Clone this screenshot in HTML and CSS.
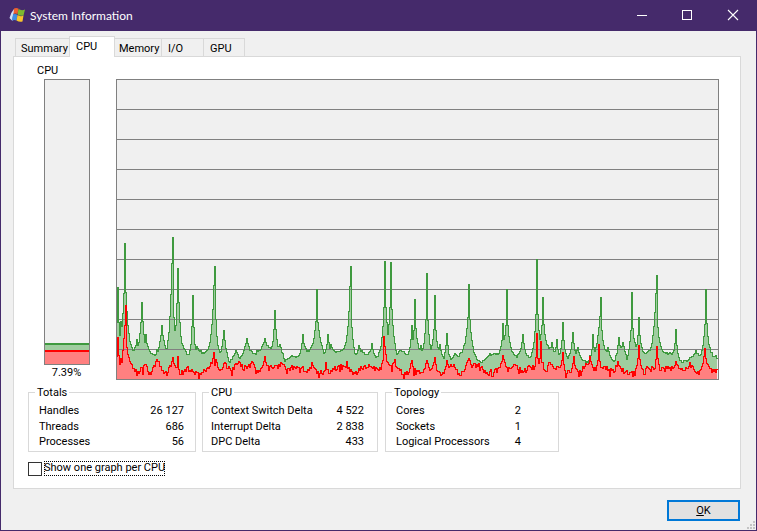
FILE: index.html
```html
<!DOCTYPE html>
<html lang="en">
<head>
<meta charset="utf-8">
<title>System Information</title>
<link rel="stylesheet" href="styles.css">
</head>
<body>
<div class="window">
  <header class="titlebar">
    <svg class="appicon" viewBox="0 0 16 16" width="16" height="16" aria-hidden="true">
      <path d="M0.500 11 Q1.500 6 5 2 L6.500 3 Q3.500 7 3.500 14 Z" fill="#cfe0f5"/>
      <path d="M5 1.500 Q7 .5 9.500 1.500 L8.500 7 Q6.500 6 4.500 7 Z" fill="#f0602e"/>
      <path d="M9.500 2 Q12.500 4 16 2.500 L14.500 8.500 Q11.500 9.500 8.500 7.500 Z" fill="#7db92f"/>
      <path d="M4 7.500 Q6.500 6.500 8.500 8 L7.500 13.500 Q5.500 12.500 3 13.500 Z" fill="#3d8fe3"/>
      <path d="M8.500 8 Q11.500 10 14.500 8.500 L13.500 14.500 Q10.500 15.500 7.500 13.500 Z" fill="#f8c52c"/>
    </svg>
    <span class="title">System Information</span>
    <div class="caption">
      <svg width="46" height="31" viewBox="0 0 46 31" aria-hidden="true"><path d="M18 15.500H28" stroke="#fff"/></svg>
      <svg width="46" height="31" viewBox="0 0 46 31" aria-hidden="true"><rect x="17.500" y="10.500" width="9" height="9" fill="none" stroke="#fff"/></svg>
      <svg width="46" height="31" viewBox="0 0 46 31" aria-hidden="true"><path d="M17 10L27 20M27 10L17 20" stroke="#fff" stroke-width="1.100"/></svg>
    </div>
  </header>
  <main class="content">
    <nav class="tabs">
      <span class="tab t-summary">Summary</span>
      <span class="tab t-cpu active">CPU</span>
      <span class="tab t-mem">Memory</span>
      <span class="tab t-io">I/O</span>
      <span class="tab t-gpu">GPU</span>
    </nav>
    <section class="panel">
      <div class="graphs">
        <div class="meter">
          <div class="meter-label">CPU</div>
          <div class="meter-bar">
            <div class="meter-green"></div>
            <div class="meter-red"></div>
          </div>
          <div class="meter-value">7.39%</div>
        </div>
        <svg class="chart" id="chart" width="603" height="301" viewBox="0 0 603 301" aria-hidden="true"></svg>
      </div>
      <div class="groups">
        <fieldset class="group g-totals">
          <legend>Totals</legend>
          <div class="row"><span>Handles</span><span>26 127</span></div>
          <div class="row"><span>Threads</span><span>686</span></div>
          <div class="row"><span>Processes</span><span>56</span></div>
        </fieldset>
        <fieldset class="group g-cpu">
          <legend>CPU</legend>
          <div class="row"><span>Context Switch Delta</span><span>4 522</span></div>
          <div class="row"><span>Interrupt Delta</span><span>2 838</span></div>
          <div class="row"><span>DPC Delta</span><span>433</span></div>
        </fieldset>
        <fieldset class="group g-topo">
          <legend>Topology</legend>
          <div class="row"><span>Cores</span><span>2</span></div>
          <div class="row"><span>Sockets</span><span>1</span></div>
          <div class="row"><span>Logical Processors</span><span>4</span></div>
        </fieldset>
      </div>
      <label class="check"><span class="box"></span><span class="check-text">Show one graph per CPU</span></label>
    </section>
    <footer class="actions">
      <button class="ok" type="button"><u>O</u>K</button>
    </footer>
  </main>
  <svg class="grip" width="10" height="10" viewBox="0 0 10 10" aria-hidden="true">
    <path d="M7 1h2v2H7zM4 4h2v2H4zM7 4h2v2H7zM1 7h2v2H1zM4 7h2v2H4zM7 7h2v2H7z" fill="#c4c4c4"/>
  </svg>
</div>
<script src="chart.js"></script>
</body>
</html>
```
FILE: styles.css
```css
* { box-sizing: border-box; }
html, body { margin: 0; padding: 0; }
body {
  width: 757px;
  height: 531px;
  overflow: hidden;
  font: 11px/16px Roboto, "Liberation Sans", sans-serif;
  color: #000;
}
.window {
  position: relative;
  width: 757px;
  height: 531px;
  background: #f0f0f0;
  border: 1px solid #452a6b;
  border-top: 0;
  display: flex;
  flex-direction: column;
}
.titlebar {
  height: 31px;
  margin: 0 -1px;
  background: #452a6b;
  color: #fff;
  display: flex;
  align-items: center;
  padding-left: 9px;
  flex: none;
}
.appicon { flex: none; margin-top: -1px; }
.title { margin-left: 5px; font: 12px/16px Lato, "Liberation Sans", sans-serif; }
.caption { margin-left: auto; display: flex; }
.caption svg { display: block; }
.content {
  flex: 1;
  padding: 6px 15px 9px 12px;
  display: flex;
  flex-direction: column;
}
.tabs { display: flex; height: 20px; align-items: flex-end; padding-left: 2px; position: relative; z-index: 1; margin-bottom: -1px; }
.tab {
  height: 18px;
  margin-bottom: 1px;
  background: #f0f0f0;
  border: 1px solid #d9d9d9;
  border-left: 0;
  border-bottom: 0;
  line-height: 19px;
  padding-left: 5px;
}
.t-summary { width: 55px; border-left: 1px solid #d9d9d9; }
.t-cpu { width: 46px; }
.t-mem { width: 47px; padding-left: 4px; }
.t-io { width: 42px; padding-left: 6px; }
.t-gpu { width: 41px; padding-left: 6px; }
.tab.active {
  height: 21px;
  margin-bottom: 0;
  margin-left: -1px;
  background: #fff;
  border-left: 1px solid #d9d9d9;
  line-height: 19px;
  padding-left: 6px;
}
.panel {
  height: 433px;
  background: #fff;
  border: 1px solid #d9d9d9;
  padding: 5px 0 0 14px;
  display: flex;
  flex-direction: column;
}
.graphs { display: flex; height: 318px; }
.meter { width: 88px; padding-left: 16px; flex: none; }
.meter-label { width: 20px; margin-left: -7px; text-align: center; height: 17px; line-height: 18px; }
.meter-bar {
  width: 46px;
  height: 286px;
  background: #f0f0f0;
  border: 1px solid #808080;
  display: flex;
  flex-direction: column;
  justify-content: flex-end;
}
.meter-green { height: 7px; background: #9fcd9f; border-top: 2px solid #3f9a3f; }
.meter-red { height: 14px; background: #ff8080; border-top: 2px solid #f00; }
.meter-value { width: 45px; text-align: center; }
.chart { display: block; flex: none; margin-top: 17px; shape-rendering: crispEdges; }
.groups { display: flex; margin-top: 4px; }
.group {
  margin: 0;
  height: 68px;
  padding: 2px 11px 0 10px;
  border: 1px solid #d9d9d9;
  min-width: 0;
}
.group legend { padding: 1px 2px 0; margin-left: -4px; line-height: 16px; }
.g-totals { width: 168px; margin-right: 6px; }
.g-cpu { width: 176px; margin-right: 7px; padding-right: 13px; padding-left: 8px; }
.g-cpu legend { margin-left: -2px; }
.g-topo { width: 174px; padding-right: 37px; }
.row { display: flex; justify-content: space-between; height: 15.500px; line-height: 16px; }
.check { display: flex; align-items: center; margin: 9px 0 0; height: 15px; }
.box { width: 14px; height: 14px; background: #fff; border: 1px solid #333; flex: none; }
.check-text { margin-left: 2px; outline: 1px dotted #000; outline-offset: -1px; height: 15px; line-height: 14px; }
.actions { flex: 1; display: flex; justify-content: flex-end; align-items: flex-start; padding-top: 11px; }
.ok {
  width: 73px;
  height: 21px;
  margin: 0 1px 0 0;
  padding: 0;
  background: #e1e1e1;
  border: 2px solid #0078d7;
  font: 11px/16px Roboto, "Liberation Sans", sans-serif;
  color: #000;
}
.grip { position: absolute; right: 0; bottom: 0; }
```
FILE: chart.js
```js
// Draws the CPU history: green = total, red = kernel time.
var greenPeaks = [[118,288,1.5],[121,320,2],[125,243,1.2],[125,262,2.5],[128,330,3],[137,340,3],[142,303,2.5],[146,335,3],[157,350,3],[162,325,3.5],[173,238,.8],[172,262,2.5],[178,267,2],[183,345,3],[193,295,1.5],[197,345,3],[215,267,1.2],[214,285,2.5],[224,329,2.5],[236,350,4],[247,338,5],[265,338,5],[275,310,1.6],[280,343,3],[303,335,2],[317,290,1.5],[317,310,3],[328,333,2],[331,345,4],[351,266,.8],[350,287,2.5],[359,346,3],[372,343,2],[385,261,.8],[385,282,2.5],[391,262,.8],[391,285,2.5],[400,350,4],[412,325,2],[415,299,1],[415,315,2.5],[421,345,2],[427,273,.8],[427,297,2.2],[435,295,1.2],[435,315,2.5],[440,345,3],[447,334,2],[455,353,4],[469,284,.9],[469,300,2.5],[490,353,6],[503,323,1.5],[507,290,1],[507,310,2.5],[523,333,2],[537,260,.7],[537,285,2],[543,297,1.5],[543,315,3],[552,343,3],[557,338,2],[563,323,2],[573,333,2],[578,347,3],[593,334,1.5],[601,297,1.2],[600,315,3],[608,348,3],[619,337,2],[623,342,3],[632,292,1],[632,312,2.2],[639,317,1.5],[643,352,2],[657,275,.8],[656,292,2.5],[676,329,1.5],[696,350,5],[706,290,.8],[706,305,2.5],[716,355,2]];
var redPeaks = [[118,335,1],[126,307,.8],[125,325,2.5],[157,357,2.5],[145,362,3],[173,358,2],[178,355,1],[214,354,2.5],[225,362,2],[240,362,3],[252,360,2],[265,357,2.5],[282,363,3],[312,362,2],[326,362,1.5],[347,362,2],[384,335,1],[385,345,2.5],[395,360,2],[412,358,1.5],[427,355,1.5],[435,355,1.5],[447,362,2],[469,358,2.5],[503,355,2.5],[515,362,2],[537,332,.8],[541,343,1.5],[550,362,2],[563,352,1.5],[574,354,1.5],[590,358,3],[599,345,1.2],[618,362,3],[639,345,1.2],[657,347,1.2],[676,358,2],[705,347,1.5],[690,364,3]];
var seed = 7331;
function rnd() { seed = (seed * 16807) % 2147483647; return seed / 2147483647; }
function envelope(x, peaks, floor) {
  var y = floor;
  for (var i = 0; i < peaks.length; i++) {
    var p = peaks[i], h = floor - p[1], v = floor - h * Math.exp(-Math.abs(x - p[0]) / p[2]);
    if (v < y) y = v;
  }
  return y;
}
var OX = 116, OY = 79, W = 603, H = 301, green = [], red = [];
var gA = 358, gB = 358, rA = 369, rB = 369;
for (var x = OX + 1; x < OX + W - 1; x++) {
  var t = (x - OX) % 7;
  if (t === 1) { gA = gB; gB = 352 + rnd() * 13; rA = rB; rB = 365 + rnd() * 10; }
  var k = ((t + 6) % 7) / 7;
  var gy = envelope(x, greenPeaks, gA + (gB - gA) * k) + (rnd() - .5) * 2;
  var ry = envelope(x, redPeaks, rA + (rB - rA) * k) + (rnd() - .5) * 5;
  if (rnd() < .06) ry += 5;
  ry = Math.min(ry, 378);
  green.push([x - OX, Math.round(Math.min(gy, ry - 1)) - OY + .5]);
  red.push([x - OX, Math.round(ry) - OY + .5]);
}
function steps(points) {
  var out = [];
  points.forEach(function (p) { out.push((p[0] - .5) + ',' + p[1], (p[0] + .5) + ',' + p[1]); });
  return out.join(' ');
}
function area(points) { return '1,' + (H - 1) + ' ' + steps(points) + ' ' + (W - 2) + ',' + (H - 1); }
var grid = '';
for (var g = 30.5; g < H - 1; g += 30) grid += '<path d="M0 ' + g + 'H' + W + '" stroke="#808080"/>';
document.getElementById('chart').innerHTML =
  '<rect x=".5" y=".5" width="' + (W - 1) + '" height="' + (H - 1) + '" fill="#f0f0f0"/>' +
  '<polygon points="' + area(green) + '" fill="#9fcd9f"/>' +
  '<polygon points="' + area(red) + '" fill="#ff8080"/>' + grid +
  '<polyline points="' + steps(green) + '" fill="none" stroke="#3f9a3f"/>' +
  '<polyline points="' + steps(red) + '" fill="none" stroke="#f00"/>' +
  '<rect x=".5" y=".5" width="' + (W - 1) + '" height="' + (H - 1) + '" fill="none" stroke="#808080"/>';
```
